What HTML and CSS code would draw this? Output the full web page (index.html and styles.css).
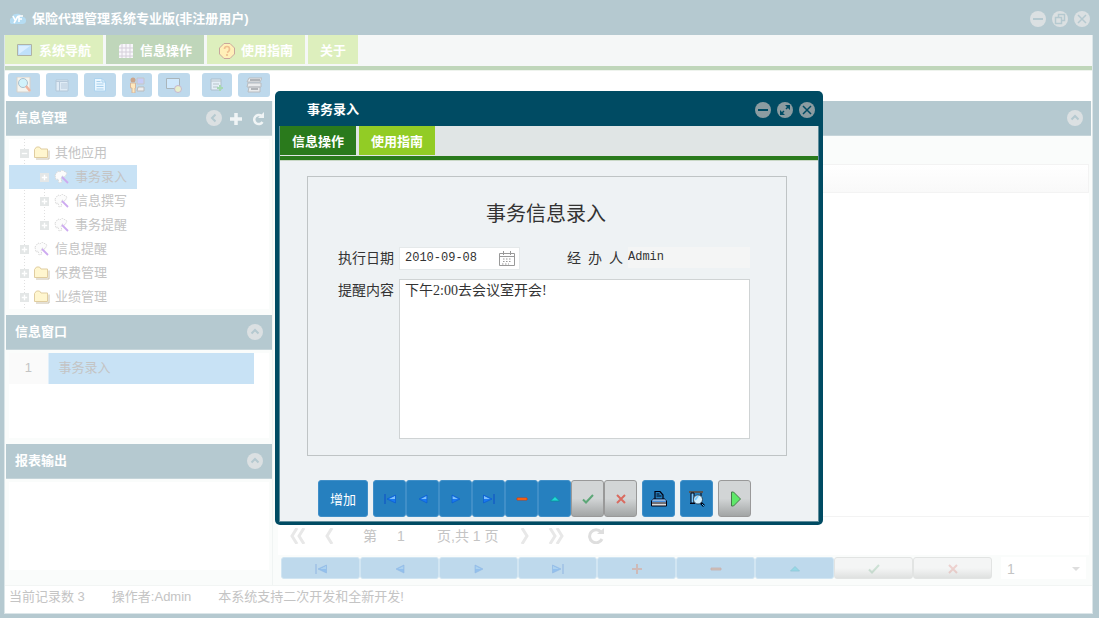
FILE: index.html
```html
<!DOCTYPE html>
<html lang="zh-CN">
<head>
<meta charset="utf-8">
<title>保险代理管理系统专业版</title>
<link rel="stylesheet" href="styles.css">
</head>
<body>
<svg class="sprite" aria-hidden="true">
  <symbol id="up" viewBox="0 0 16 16"><circle class="disc" cx="8" cy="8" r="8"/><path class="mark" d="M4.500 9.500 8 6l3.500 3.500"/></symbol>
  <symbol id="left" viewBox="0 0 16 16"><circle class="disc" cx="8" cy="8" r="8"/><path class="mark" d="M9.500 4.500 6 8l3.500 3.500"/></symbol>
  <symbol id="min" viewBox="0 0 16 16"><circle class="disc" cx="8" cy="8" r="8"/><path class="mark" d="M3 8h10"/></symbol>
  <symbol id="close" viewBox="0 0 16 16"><circle class="disc" cx="8" cy="8" r="8"/><path class="mark thin" d="m4 4 8 8M12 4l-8 8"/></symbol>
  <symbol id="restore" viewBox="0 0 16 16"><circle class="disc" cx="8" cy="8" r="8"/><path class="mark thin" d="M3.500 6.500h6v6h-6zM6.500 6V3.500h6v6H10"/></symbol>
  <symbol id="max" viewBox="0 0 16 16"><circle class="disc" cx="8" cy="8" r="8"/><path class="arrow" d="M8 3h5v5zM3 8v5h5z"/><path class="mark thin" d="M11 5 9 7M5 11l2-2"/></symbol>
  <symbol id="first" viewBox="0 0 12 10"><path d="M1 0v10" stroke="#0a4fc8" stroke-width="1"/><path d="M11.500 1v8L3 5z" fill="#1878f0"/><path d="M11 2v3H5z" fill="#7cc0fa"/><path d="M11.500 1v8L3 5z" fill="none" stroke="#0858d0" stroke-width=".6"/></symbol>
  <symbol id="prev" viewBox="0 0 12 10"><path d="M10 1v8L2 5z" fill="#1878f0"/><path d="M9.500 2v3H4z" fill="#7cc0fa"/><path d="M10 1v8L2 5z" fill="none" stroke="#0858d0" stroke-width=".6"/></symbol>
  <symbol id="next" viewBox="0 0 12 10"><path d="M2 1v8l8-4z" fill="#1878f0"/><path d="M2.500 2v3H8z" fill="#7cc0fa"/><path d="M2 1v8l8-4z" fill="none" stroke="#0858d0" stroke-width=".6"/></symbol>
  <symbol id="last" viewBox="0 0 12 10"><path d="M11 0v10" stroke="#0a4fc8" stroke-width="1"/><path d="M.5 1v8L9 5z" fill="#1878f0"/><path d="M1 2v3h6z" fill="#7cc0fa"/><path d="M.5 1v8L9 5z" fill="none" stroke="#0858d0" stroke-width=".6"/></symbol>
  <symbol id="minus" viewBox="0 0 12 10"><path d="M1 4h10v2H1z" fill="#ff7a20" stroke="#e03800" stroke-width=".8"/></symbol>
  <symbol id="plus" viewBox="0 0 12 10"><path d="M1 5h10M6 0v10" stroke="#ff6020" stroke-width="2"/></symbol>
  <symbol id="edit" viewBox="0 0 12 10"><path d="m6 2.500 4.500 4.500h-9z" fill="#20d8d8" stroke="#089098" stroke-width=".8"/></symbol>
  <symbol id="ok" viewBox="0 0 12 10"><path d="m1 5.500 3 3L11 1" fill="none" stroke="#5ca777" stroke-width="2"/></symbol>
  <symbol id="no" viewBox="0 0 12 10"><path d="m2 1 8 8M10 1 2 9" stroke="#d96b60" stroke-width="2"/></symbol>
  <symbol id="folder" viewBox="0 0 16 14"><path d="M.5 11.500v-8l2-2.500h3l1.500 2h6.500v8.500z" fill="#fff6cf" stroke="#e0cda0"/><path d="M15 4.500v8.500H2" fill="none" stroke="#c9c0ac"/></symbol>
  <symbol id="wand" viewBox="0 0 16 14"><path d="m1 5 3-4 2 1 2-2 5 3-2 4-3-1-1 3 1 3-3 1-1-4-2 1z" fill="#fcfcfc" stroke="#dadada" stroke-dasharray="1.500 1"/><path d="m8 7 6 6" stroke="#cdaaf0" stroke-width="1.800"/></symbol>
  <symbol id="expand" viewBox="0 0 10 10"><path fill="#e4e7e7" d="M0 0h10v10H0z"/><path d="M2 5h6M5 2v6" stroke="#fff" stroke-width="1.500"/></symbol>
  <symbol id="collapse" viewBox="0 0 10 10"><path fill="#e4e7e7" d="M0 0h10v10H0z"/><path d="M2 5h6" stroke="#fff" stroke-width="1.500"/></symbol>
</svg>

<div class="app">
  <header class="titlebar">
    <svg class="logo" viewBox="0 0 16 14"><path d="M3 12a3 3 0 0 1-1-6 4 4 0 0 1 4-4c3-1 5 0 6 3a3 3 0 0 1 1 7z" fill="#b5dcf2"/><path d="m3 4 2 4m3-4-4 7M13 4H9v6m0-3h3" stroke="#fff" stroke-width="1.600" fill="none"/></svg>
    <h1 class="title">保险代理管理系统专业版(非注册用户)</h1>
    <button class="round" aria-label="最小化"><svg><use href="#min"/></svg></button>
    <button class="round" aria-label="还原"><svg><use href="#restore"/></svg></button>
    <button class="round" aria-label="关闭"><svg><use href="#close"/></svg></button>
  </header>

  <div class="surface">
    <nav class="tabs">
      <button class="tab"><svg class="tab-icon" viewBox="0 0 16 16"><path d="M.5 1.500h14v11H.5z" fill="#bfe0fa" stroke="#b0b2a4"/><path d="M2 11V3h11z" fill="#dbeeff"/></svg>系统导航</button>
      <button class="tab active"><svg class="tab-icon" viewBox="0 0 16 16"><path d="M3 1h12v14H1V3z" fill="#f8f7fa"/><path d="M1 5h14M1 9h14M1 13h14M4 1v14M8 1v14M12 1v14" stroke="#d5cfda"/></svg>信息操作</button>
      <button class="tab"><svg class="tab-icon" viewBox="0 0 16 16"><path d="M5 .5h6L15.500 5v6L11 15.500H5L.5 11V5z" fill="#fff0b8" stroke="#c9a79c"/><path d="M5.500 6q0-2.500 2.500-2.500T10.500 6 8 9.500M8 11v2" fill="none" stroke="#f0c090" stroke-width="1.700"/></svg>使用指南</button>
      <button class="tab">关于</button>
    </nav>

    <div class="toolbar">
      <button class="tool" aria-label="预览"><svg viewBox="0 0 16 16"><path d="M1 0h13v15H1z" fill="#f4f4ef" stroke="#d7d2cb"/><circle cx="7" cy="6" r="4.500" fill="#d2f2fb" stroke="#aac0ce"/><path d="m10 9 4 5" stroke="#efb5a0" stroke-width="2.500"/></svg></button>
      <button class="tool" aria-label="列表"><svg viewBox="0 0 16 16"><path d="M2 3h12v11H2z" fill="#e0ecf6" stroke="#b4c8d8"/><path d="M2 4.500h12M5.500 5v9M7 7h6M7 9h6M7 11h6" stroke="#b8cadb"/></svg></button>
      <button class="tool" aria-label="文档"><svg viewBox="0 0 16 16"><path d="M2.500 1.500H10l3.500 3.500v9h-11z" fill="#e9f6ff" stroke="#add4ef"/><path d="M10 1.500V5h3.500M4.500 4.500h4M4.500 7h7M4.500 9.500h7M4.500 12h7" stroke="#a8d0ec" fill="none"/></svg></button>
      <button class="tool narrow" aria-label="用户"><svg viewBox="0 0 16 16"><circle cx="4" cy="3" r="2.500" fill="#cba58c"/><path d="M1.500 6h5v5H6v5H3v-5H1.500z" fill="#ffe8bb" stroke="#d4b7a0"/><path d="M8 1h7v6H8z" fill="#c6cdf8" stroke="#c6c6c6"/><path d="M9 10h6v4H8z" fill="#eee" stroke="#bbb"/></svg></button>
      <button class="tool" aria-label="查看"><svg viewBox="0 0 16 16"><path d="M.5 1.500h13v10H.5z" fill="#cfe8fc" stroke="#aab5ba"/><circle cx="12" cy="12" r="3.500" fill="#e7efcc" stroke="#c7b5cf"/></svg></button>
      <button class="tool narrow gap" aria-label="添加"><svg viewBox="0 0 16 16"><path d="M2 2h10v11H2z" fill="#e5eff7" stroke="#aebfcc"/><path d="M2 4h10M4 7h6M4 10h5" stroke="#b8c3ca"/><path d="M11 8v6M8 11h6" stroke="#a7d9b2" stroke-width="2"/></svg></button>
      <button class="tool" aria-label="打印"><svg viewBox="0 0 16 16"><path d="M3 1h13l-2 4H1zM2 6h13v4H1zM3 10h11v5H2z" fill="#e9ebed" stroke="#b8bcc0"/><path d="M4 3h10M5 12h7" stroke="#b0b4b8" stroke-width="2"/></svg></button>
    </div>

    <div class="columns">
      <aside class="side">
        <section class="panel tree-panel">
          <h2 class="bar">信息管理
            <span class="bar-tools">
              <button class="round" aria-label="收起"><svg><use href="#left"/></svg></button>
              <button class="round" aria-label="新增"><svg viewBox="0 0 16 16"><path d="M8 3v12M2 9h12" stroke="#f0f4f5" stroke-width="3.500"/></svg></button>
              <button class="round" aria-label="刷新"><svg viewBox="0 0 16 16"><path d="M11.500 6A4.500 4.500 0 1 0 12.500 12" fill="none" stroke="#f0f4f5" stroke-width="2.500"/><path d="M8 8h6V2z" fill="#f0f4f5"/></svg></button>
            </span>
          </h2>
          <div class="well">
            <ul class="tree">
              <li><button class="node"><svg class="knob"><use href="#collapse"/></svg><svg class="leaf"><use href="#folder"/></svg>其他应用</button>
                <ul class="branch">
                  <li><button class="node selected"><svg class="knob"><use href="#expand"/></svg><svg class="leaf"><use href="#wand"/></svg>事务录入</button></li>
                  <li><button class="node"><svg class="knob"><use href="#expand"/></svg><svg class="leaf"><use href="#wand"/></svg>信息撰写</button></li>
                  <li><button class="node"><svg class="knob"><use href="#expand"/></svg><svg class="leaf"><use href="#wand"/></svg>事务提醒</button></li>
                </ul>
              </li>
              <li><button class="node"><svg class="knob"><use href="#expand"/></svg><svg class="leaf"><use href="#wand"/></svg>信息提醒</button></li>
              <li><button class="node"><svg class="knob"><use href="#expand"/></svg><svg class="leaf"><use href="#folder"/></svg>保费管理</button></li>
              <li><button class="node"><svg class="knob"><use href="#expand"/></svg><svg class="leaf"><use href="#folder"/></svg>业绩管理</button></li>
            </ul>
          </div>
        </section>
        <section class="panel list-panel">
          <h2 class="bar">信息窗口<span class="bar-tools"><button class="round" aria-label="折叠"><svg><use href="#up"/></svg></button></span></h2>
          <div class="well">
            <table class="windows"><tr><th>1</th><td>事务录入</td></tr></table>
          </div>
        </section>
        <section class="panel report-panel">
          <h2 class="bar">报表输出<span class="bar-tools"><button class="round" aria-label="折叠"><svg><use href="#up"/></svg></button></span></h2>
          <div class="well"></div>
        </section>
      </aside>

      <main class="main">
        <div class="bar"><span class="bar-tools"><button class="round" aria-label="折叠"><svg><use href="#up"/></svg></button></span></div>
        <div class="grid-tools"></div>
        <div class="grid-head"></div>
        <div class="grid-body"></div>
        <div class="pager">
          <button class="page" aria-label="首页"><svg viewBox="0 0 16 16"><path d="M7 0 2 8l5 8M14 0 9 8l5 8"/></svg></button>
          <button class="page" aria-label="上一页"><svg viewBox="0 0 16 16"><path d="M10 0 5 8l5 8"/></svg></button>
          <label class="page-label" for="page">第</label>
          <input class="page-input" id="page" value="1">
          <span class="page-total">页,共 1 页</span>
          <button class="page" aria-label="下一页"><svg viewBox="0 0 16 16"><path d="m6 0 5 8-5 8"/></svg></button>
          <button class="page" aria-label="末页"><svg viewBox="0 0 16 16"><path d="m2 0 5 8-5 8M9 0l5 8-5 8"/></svg></button>
          <button class="page reload" aria-label="刷新"><svg viewBox="0 0 16 16"><path d="M13 4a6.500 6.500 0 1 0 1 7"/><path class="tip" d="M9 6h7V0z"/></svg></button>
        </div>
        <div class="records">
          <div class="record-keys">
            <button class="wide" aria-label="首条"><svg><use href="#first"/></svg></button>
            <button class="wide" aria-label="上条"><svg><use href="#prev"/></svg></button>
            <button class="wide" aria-label="下条"><svg><use href="#next"/></svg></button>
            <button class="wide" aria-label="末条"><svg><use href="#last"/></svg></button>
            <button class="wide" aria-label="添加"><svg><use href="#plus"/></svg></button>
            <button class="wide" aria-label="删除"><svg><use href="#minus"/></svg></button>
            <button class="wide" aria-label="编辑"><svg><use href="#edit"/></svg></button>
            <button class="wide off" aria-label="保存"><svg><use href="#ok"/></svg></button>
            <button class="wide off" aria-label="取消"><svg><use href="#no"/></svg></button>
          </div>
          <div class="choice">
            <select aria-label="记录"><option>1</option></select>
            <svg class="caret" viewBox="0 0 8 4"><path d="M0 0h8L4 4z" fill="#dedede"/></svg>
          </div>
        </div>
      </main>
    </div>

    <footer class="status"><span>当前记录数 3</span><span>操作者:Admin</span><span>本系统支持二次开发和全新开发!</span></footer>
  </div>
</div>

<div class="dialog" role="dialog" aria-labelledby="dialog-title">
  <header class="dialog-head">
    <h2 class="title" id="dialog-title">事务录入</h2>
    <button class="round" aria-label="最小化"><svg><use href="#min"/></svg></button>
    <button class="round" aria-label="最大化"><svg><use href="#max"/></svg></button>
    <button class="round" aria-label="关闭"><svg><use href="#close"/></svg></button>
  </header>
  <div class="dialog-body">
    <nav class="dialog-tabs">
      <button class="dialog-tab active">信息操作</button>
      <button class="dialog-tab">使用指南</button>
    </nav>
    <form class="form">
      <h3 class="form-title">事务信息录入</h3>
      <div class="field-row">
        <label for="date">执行日期</label>
        <div class="date">
          <input id="date" value="2010-09-08">
          <svg viewBox="0 0 16 16"><path d="M.5 2.500h15v12H.5zM.5 5.500h15M4.500 0v4M11.500 0v4" fill="none" stroke="#999"/><path d="M4 8h9M4 10.500h9M3 13h7" stroke="#999" stroke-dasharray="1.500 1.500"/></svg>
        </div>
        <label class="agent-label" for="agent">经&ensp;办&ensp;人</label>
        <input class="agent" id="agent" value="Admin" readonly>
      </div>
      <div class="field-row">
        <label for="note">提醒内容</label>
        <textarea id="note">下午2:00去会议室开会!</textarea>
      </div>
    </form>
    <div class="actions">
      <button class="key add">增加</button>
      <div class="key-group">
        <button class="key" aria-label="首条"><svg><use href="#first"/></svg></button>
        <button class="key" aria-label="上条"><svg><use href="#prev"/></svg></button>
        <button class="key" aria-label="下条"><svg><use href="#next"/></svg></button>
        <button class="key" aria-label="末条"><svg><use href="#last"/></svg></button>
        <button class="key" aria-label="删除"><svg><use href="#minus"/></svg></button>
        <button class="key" aria-label="编辑"><svg><use href="#edit"/></svg></button>
        <button class="key off" aria-label="保存"><svg><use href="#ok"/></svg></button>
        <button class="key off" aria-label="取消"><svg><use href="#no"/></svg></button>
      </div>
      <button class="key big" aria-label="打印"><svg viewBox="0 0 16 16"><path d="M4 8V.5h5L12 4v4" fill="#2680bf" stroke="#001" stroke-width="1.200"/><path d="M5.500 3h3M5.500 5h5" stroke="#001"/><path d="M2 8h12l1.500 2v5H.5v-5z" fill="#ddd" stroke="#001"/><path d="M1 10.500h14M1 9h14" stroke="#4a90dd"/><path d="M1 12h14" stroke="#001"/></svg></button>
      <button class="key big" aria-label="预览"><svg viewBox="0 0 16 16"><path d="M0 1h14" stroke="#555" stroke-width="2"/><path d="M2 2h3v10H2z" fill="#79c9ff" stroke="#001"/><path d="M1 12.500h5M12 2v3" stroke="#001"/><circle cx="9" cy="8.500" r="4.500" fill="#d5f1ff" stroke="#234" stroke-width=".8"/><path d="m6 9 3-4" stroke="#79c9ff" stroke-width="2"/><path d="m12 12 3 3" stroke="#001" stroke-width="2.500"/><path d="m13 13 2 2" stroke="#32b4ff"/></svg></button>
      <button class="key big off" aria-label="运行"><svg viewBox="0 0 16 16"><path d="M4.500 1v14h2l7-7-7-7z" fill="#5fe86a" stroke="#477a4a"/></svg></button>
    </div>
  </div>
</div>
</body>
</html>
```
FILE: styles.css
```css
* { box-sizing: border-box; }
html, body { height: 100%; }
body {
  --disc: #dbe0e2;
  --mark: #b5c9d0;
  margin: 0;
  background: #b5c9d0;
  color: #c4c4c4;
  font: 13px/20px "Liberation Sans", "Noto Sans CJK SC", sans-serif;
}
button, input, select, textarea { margin: 0; padding: 0; border: 0; background: none; color: inherit; font: inherit; outline: 0; }
h1, h2, h3, ul { margin: 0; padding: 0; font-size: 13px; list-style: none; }
button svg { display: block; flex: none; }
.sprite { position: absolute; width: 0; height: 0; }

.round { width: 16px; height: 16px; }
.round svg { width: 16px; height: 16px; }
.disc { fill: var(--disc); }
.arrow { fill: var(--mark); }
.mark { fill: none; stroke: var(--mark); stroke-width: 2; }
.thin { stroke-width: 1.5; }

.app { display: flex; flex-direction: column; min-height: 100vh; padding: 0 6px 4px 4px; }
.titlebar { display: flex; align-items: center; gap: 6px; height: 35px; padding: 2px 3px 0 6px; color: #fff; }
.logo { width: 16px; height: 14px; }
.title { flex: 1; font-weight: bold; }
.surface { flex: 1; display: flex; flex-direction: column; padding-bottom: 4px; border: 1px solid #dce6e9; border-top: 0; background: #fff; }

.tabs { display: flex; gap: 3px; height: 35px; border-bottom: 4px solid #bfd6ba; background: #f5f7f7; box-shadow: 0 1px #eef3ed; }
.tab { display: flex; align-items: center; gap: 6px; height: 29px; padding: 3px 12px 0; background: #ddefbd; color: #fff; font-weight: bold; }
.tab.active { background: #bfd6ba; }
.tab-icon { width: 16px; height: 16px; }

.toolbar { display: flex; gap: 6px; height: 31px; padding: 3px; }
.tool { display: flex; align-items: center; justify-content: center; width: 32px; height: 24px; border-radius: 3px; background: #bed9ec; }
.tool.narrow { width: 30px; }
.tool.gap { margin-left: 6px; }
.tool svg { width: 16px; height: 16px; }

.columns { flex: 1; display: flex; gap: 5px; padding: 0 1px; background: #fafcfb; }
.side { display: flex; flex-direction: column; flex: none; width: 267px; border-right: 1px solid #f0f4f3; }
.bar { display: flex; align-items: center; flex: none; height: 35px; padding: 0 8px 0 9px; border-bottom: 1px solid #c6d5da; background: #b5c9d0; color: #fff; }
.bar-tools { display: flex; gap: 6px; margin-left: auto; }
.panel { display: flex; flex-direction: column; padding-bottom: 6px; }
.panel .bar { padding-right: 9px; }
.tree-panel { height: 214px; }
.tree-panel .bar { padding-right: 6px; }
.list-panel { height: 129px; }
.report-panel { flex: 1; padding-bottom: 15px; }
.well { flex: 1; margin: 3px 3px 0; background: #fff; }

.tree { padding-top: 2px; background: repeating-linear-gradient(#e0e0e0 0 1px, transparent 1px 3px) 15px 0 / 1px 100% no-repeat; }
.branch { background: repeating-linear-gradient(#e0e0e0 0 1px, transparent 1px 3px) 35px 0 / 1px 60px no-repeat; }
.node { display: flex; align-items: center; height: 24px; padding-left: 11px; }
.branch .node { width: 128px; padding-left: 31px; }
.node.selected { background: #c8e2f5; }
.knob { width: 9px; height: 9px; margin-right: 5px; }
.leaf { width: 16px; height: 14px; margin-right: 5px; }
.windows { width: 245px; border-collapse: collapse; }
.windows th { width: 39px; height: 31px; padding: 0 0 2px; border-right: 1px solid #e1effa; background: #fafafa; font-weight: normal; }
.windows td { padding: 0 10px 2px; background: #c8e2f5; }

.main { display: flex; flex-direction: column; flex: 1; min-width: 0; }
.grid-tools { height: 28px; }
.grid-head { height: 29px; margin-right: 2px; border: 1px solid #f3f3f3; background: linear-gradient(#fff, #f9f9f9); }
.grid-body { flex: 1; margin-right: 2px; border-bottom: 1px solid #f3f3f3; background: #fff; }
.pager { display: flex; align-items: center; gap: 16px; height: 38px; margin-right: 2px; padding-left: 12px; background: #fff; font-size: 14px; }
.page { width: 16px; height: 16px; }
.page path { fill: none; stroke: #e8e8e8; stroke-width: 3; }
.page .tip { fill: #dedede; stroke: none; }
.reload path { stroke: #dedede; }
.reload { margin-left: 8px; }
.page-label { margin-left: 9px; }
.page-input { width: 40px; height: 20px; margin-left: -12px; padding-left: 16px; }
.page-total { margin-left: 0; margin-right: 2px; }
.records { display: flex; gap: 9px; height: 30px; padding: 2px 5px 6px 3px; }
.record-keys { display: flex; flex: 1; }
.wide { display: flex; flex: 1; align-items: center; justify-content: center; padding-top: 2px; border: 1px solid #d1e5f2; border-radius: 3px; background: #bed9ec; }
.wide svg { width: 12px; height: 10px; opacity: .25; }
.wide.off { border-color: #e2e4e3; background: linear-gradient(#f4f5f5 50%, #dfe1e0); }
.choice { position: relative; width: 85px; background: #fff; }
.choice select { width: 100%; height: 22px; padding: 2px 0 0 6px; appearance: none; font-size: 14px; }
.caret { position: absolute; top: 10px; right: 6px; width: 8px; height: 4px; pointer-events: none; }
.status { display: flex; gap: 27px; height: 24px; padding: 1px 4px; border-top: 1px solid #f2f5f4; }

.dialog {
  --disc: #8b9ca1;
  --mark: #004b63;
  position: absolute; top: 91px; left: 275px;
  width: 548px; padding: 0 4px 3px; border-radius: 5px;
  background: #004b63; color: #333;
}
.dialog-head { display: flex; align-items: center; gap: 6px; height: 35px; padding: 2px 4px 0 28px; color: #fff; }
.dialog-body { border: 1px solid #5f8d9b; border-top: 0; background: #eef2f4; }
.dialog-tabs { display: flex; gap: 3px; height: 34px; border-bottom: 4px solid #2a7a1c; background: #e0e5e5; box-shadow: 0 1px #c9d8c6; }
.dialog-tab { height: 29px; padding: 2px 12px 0; background: #92cc25; color: #fff; font-weight: bold; }
.dialog-tab.active { background: #2a7a1c; }
.form { margin: 16px 31px 0 27px; padding: 24px 36px 16px 30px; border: 1px solid #bfc4c5; font-size: 14px; }
.form-title { margin: 0 0 20px 4px; font-size: 20px; line-height: 26px; font-weight: normal; text-align: center; }
.field-row { display: flex; gap: 5px; margin-bottom: 9px; line-height: 23px; }
.field-row label { flex: none; }
.field-row + .field-row { margin-bottom: 0; }
.date { display: flex; align-items: center; width: 121px; height: 23px; padding: 0 4px 0 5px; border: 1px solid #e5e9ea; background: #fff; }
.date input, .agent { min-width: 0; font-family: "Liberation Mono", monospace; font-size: 12px; }
.date input { flex: 1; }
.date svg { flex: none; width: 16px; height: 16px; }
.field-row .agent-label { margin-left: 42px; }
.agent { flex: 1; height: 21px; background: #f4f5f5; }
.field-row textarea { flex: 1; height: 160px; padding: 0 5px; border: 1px solid #cfd3d4; background: #fff; resize: none; font-family: "Liberation Serif", "Noto Sans CJK SC", serif; line-height: 22px; }
.actions { display: flex; gap: 5px; padding: 24px 37px 4px 38px; }
.key { display: flex; align-items: center; justify-content: center; width: 33px; height: 37px; border: 1px solid #408fc8; border-radius: 3px; background: #2680bf; color: #fff; }
.key.add { width: 50px; padding-top: 3px; }
.key svg { width: 12px; height: 10px; }
.key.big svg { width: 16px; height: 16px; }
.key-group { display: flex; }
.key.off { border-color: #999; background: linear-gradient(#d2d5d6 50%, #a2a5a5); }
```
